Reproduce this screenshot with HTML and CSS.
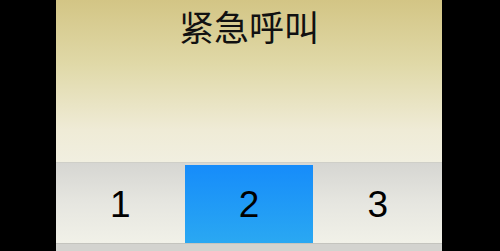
FILE: index.html
```html
<!DOCTYPE html>
<html>
  <head>
    <meta charset="utf-8">
    <title>紧急呼叫</title>
    <link rel="stylesheet" href="styles.css">
  </head>
  <body>
    <div class="screen">
      <div class="header">
        <h1 class="title">紧急呼叫</h1>
      </div>
      <div class="tabs">
        <div class="tab">1</div>
        <div class="tab active">2</div>
        <div class="tab">3</div>
      </div>
      <div class="footer"></div>
    </div>
  </body>
</html>
```

FILE: styles.css
```css
* {
  box-sizing: border-box;
}

body {
  margin: 0;
  padding: 0;
  background-color: #000;
  font-family: "Liberation Sans", "Noto Sans CJK SC", sans-serif;
}

.screen {
  width: 386px;
  height: 251px;
  margin-left: 56px;
  display: flex;
  flex-direction: column;
}

.header {
  height: 163px;
  background: linear-gradient(to bottom, #d3c585 0%, #e0d9a8 40%, #efebd6 80%, #f1efe0 100%);
  border-bottom: 1px solid #cfcfc8;
}

.title {
  margin: 0;
  text-align: center;
  font-family: "Noto Sans CJK SC", sans-serif;
  font-size: 35px;
  font-weight: normal;
  line-height: normal;
  color: #111;
}

.tabs {
  display: flex;
  height: 80px;
  background-color: #d8d8d4;
}

.tab {
  flex: 1;
  display: flex;
  align-items: center;
  justify-content: center;
  background: linear-gradient(to bottom, #d6d6d2 0%, #e6e6e0 50%, #f1f1e8 100%);
  font-family: "Liberation Sans", sans-serif;
  font-size: 37px;
  color: #000;
  padding-top: 4px;
}

.tab.active {
  margin-top: 2px;
  background: linear-gradient(to bottom, #168cfa 0%, #2aa8f2 100%);
  padding-top: 2px;
}

.footer {
  flex: 1;
  background-color: #d3d3cf;
  border-top: 1px solid #c4c4be;
}
```
